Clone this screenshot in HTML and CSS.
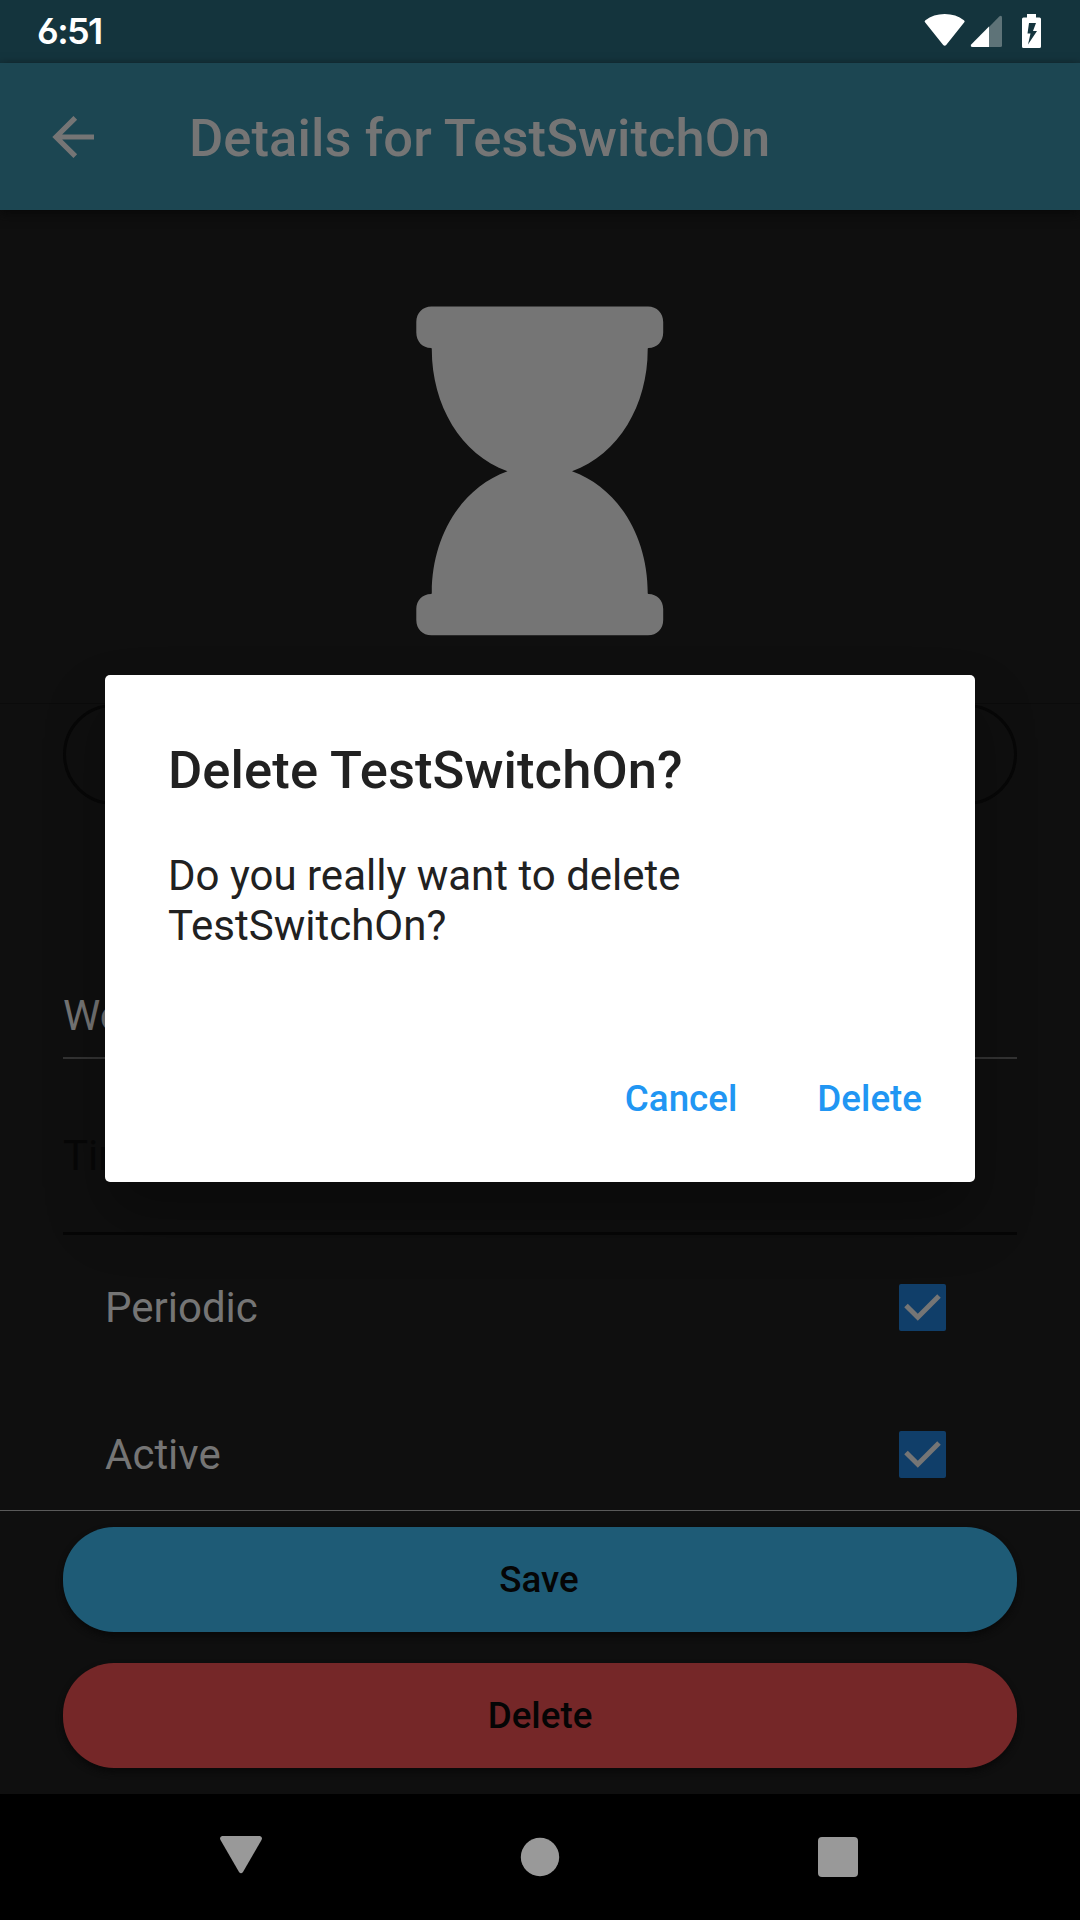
FILE: index.html
```html
<!DOCTYPE html>
<html lang="en">
<head>
<meta charset="utf-8">
<title>Details for TestSwitchOn</title>
<link rel="stylesheet" href="styles.css">
</head>
<body>
<div class="screen">
  <div class="status-bar">
    <span class="clock">6:51</span>
    <svg class="status-icons" width="120" height="36" viewBox="0 0 120 36">
      <path fill="#fff" d="M1 8.3Q0 7.1 1.4 6.2Q9.500 0 20.700 0Q32 0 39.900 6.200Q41.300 7.100 40.300 8.300L22.200 31Q20.700 32.600 19.200 31Z"/>
      <path fill="#5e7378" d="M65 13V33H76.500Q78 33 78 31.500V3.500Q78 1 75.500 2.200Z"/>
      <path fill="#fff" d="M65 12.600V33H48.500Q46 33 47.200 30.500Z"/>
      <path fill="#fff" fill-rule="evenodd" d="M103 0H112V3.500H115.500Q117 3.500 117 5V32.500Q117 34 115.500 34H99.500Q98 34 98 32.500V5Q98 3.500 99.500 3.500H103ZM105 9L103.500 19.500H106.500L104 30.500L113 17H109L112 9Z"/>
    </svg>
  </div>
  <header class="app-bar">
    <svg class="back" width="42" height="42" viewBox="0 0 42 42">
      <path fill="none" stroke="#757575" stroke-width="5.200" d="M42 21H4.500M23.300 1.800L4 21L23.300 40.200"/>
    </svg>
    <h1 class="app-title">Details for TestSwitchOn</h1>
  </header>
  <main class="content">
    <div class="hero">
      <svg width="248" height="330" viewBox="0 0 248 330">
        <path fill="#757575" d="M15.500 .5H232C241 .5 247.200 7 247.200 16V26.500C247.200 35.500 241 42 232.500 42Q231.700 42 231.700 43C232 98 203 149 156 165.200C203 182 232 232 231.700 287Q231.700 288 232.500 288C241 288 247.200 294.500 247.200 303V314C247.200 323 241 329.300 232 329.300H15.500C6.500 329.300 .3 323 .3 314V303C.3 294.500 6.500 288 15 288Q15.800 288 15.800 287C15.500 232 44.500 182 91.500 165.200C44.500 149 15.500 98 15.800 43Q15.800 42 15 42C6.500 42 .3 35.500 .3 26.500V16C.3 7 6.500 .5 15.500 .5Z"/>
      </svg>
    </div>
    <div class="form">
      <div class="outline-button"></div>
      <div class="field weekdays">Weekdays</div>
      <div class="field time">Time</div>
      <div class="option">
        <span>Periodic</span>
        <svg width="47" height="47" viewBox="0 0 47 47"><rect width="47" height="47" rx="2" fill="#103e69"/><path fill="none" stroke="#757575" stroke-width="5" d="M7 21.500L18.800 33.300L40 12"/></svg>
      </div>
      <div class="option">
        <span>Active</span>
        <svg width="47" height="47" viewBox="0 0 47 47"><rect width="47" height="47" rx="2" fill="#103e69"/><path fill="none" stroke="#757575" stroke-width="5" d="M7 21.500L18.800 33.300L40 12"/></svg>
      </div>
    </div>
  </main>
  <footer class="actions">
    <button class="pill save">Save</button>
    <button class="pill delete">Delete</button>
  </footer>
  <nav class="nav-bar">
    <svg width="42" height="42" viewBox="0 0 42 42"><path fill="#999" d="M2 0H40Q43 1 41.500 4L23 36Q21 38.500 19 36L.5 4Q-1 1 2 0Z"/></svg>
    <svg width="40" height="40" viewBox="0 0 40 40"><circle cx="20" cy="20" r="19.200" fill="#999"/></svg>
    <svg width="40" height="40" viewBox="0 0 40 40"><rect width="40" height="40" rx="4" fill="#999"/></svg>
  </nav>
  <div class="dialog" role="dialog">
    <h2 class="dialog-title">Delete TestSwitchOn?</h2>
    <p class="dialog-text">Do you really want to delete TestSwitchOn?</p>
    <div class="dialog-actions">
      <button class="text-button">Cancel</button>
      <button class="text-button">Delete</button>
    </div>
  </div>
</div>
</body>
</html>
```
FILE: styles.css
```css
* { box-sizing: border-box; }
body {
  margin: 0;
  background: #000;
  font-family: Roboto, "Liberation Sans", sans-serif;
}
h1, h2, p { margin: 0; font-weight: 500; }
svg { display: block; flex: none; }
button { border: 0; font-family: inherit; }

.screen {
  position: relative;
  display: flex;
  flex-direction: column;
  width: 1080px;
  height: 1920px;
  overflow: hidden;
  background: #0f0f0f;
}

.status-bar {
  display: flex;
  justify-content: space-between;
  height: 63px;
  padding: 14px 36px 0 37px;
  background: #14343d;
}
.clock {
  color: #fff;
  font: 600 36px/35px Inter, sans-serif;
  font-feature-settings: "ss01";
  letter-spacing: -1.6px;
}

.app-bar {
  display: flex;
  align-items: center;
  gap: 95px;
  height: 147px;
  padding-left: 52px;
  background: #1c4652;
  box-shadow: 0 4px 10px #090909;
  z-index: 1;
}
.app-title {
  padding-top: 3px;
  color: #757575;
  font-size: 52.5px;
  line-height: 60px;
  letter-spacing: .08px;
}

.content {
  display: flex;
  flex-direction: column;
  height: 1301px;
  overflow: hidden;
  border-bottom: 1px solid #5a5a5a;
}
.hero {
  display: flex;
  flex: none;
  justify-content: center;
  height: 494px;
  padding-top: 96px;
  border-bottom: 1px solid #0b0b0b;
}
.form { padding: 0 63px; font-size: 42px; }
.outline-button {
  height: 101px;
  border: 3px solid #070707;
  border-radius: 51px;
}
.field { line-height: 50px; }
.weekdays {
  height: 254px;
  padding-top: 186px;
  border-bottom: 2px solid #333;
  color: #757575;
}
.time {
  height: 176px;
  padding-top: 72px;
  border-bottom: 3px solid #060606;
  color: #070707;
}
.option {
  display: flex;
  align-items: center;
  justify-content: space-between;
  height: 147px;
  margin-top: -1px;
  padding: 0 71px 0 42px;
  color: #757575;
}
.option + .option { margin-top: 0; }

.actions {
  display: flex;
  flex-direction: column;
  gap: 31px;
  height: 283px;
  padding: 16px 63px 0;
}
.pill {
  height: 105px;
  border-radius: 51px;
  color: #050505;
  font-size: 36.75px;
  font-weight: 500;
  box-shadow: 0 4px 6px #090909;
}
.save { padding-right: 8px; background: #1e5b76; }
.delete { background: #752728; }

.nav-bar {
  display: flex;
  justify-content: space-between;
  align-items: center;
  height: 126px;
  padding: 0 222px 0 220px;
  background: #000;
}

.dialog {
  position: absolute;
  top: 675px;
  left: 105px;
  display: flex;
  flex-direction: column;
  width: 870px;
  height: 507px;
  padding: 65px 21px 21px 63px;
  border-radius: 5px;
  background: #fff;
  color: #212121;
  box-shadow: 0 34px 60px rgba(0, 0, 0, .3);
  z-index: 2;
}
.dialog-title {
  font-size: 52.5px;
  line-height: 60px;
  letter-spacing: .1px;
}
.dialog-text {
  width: 620px;
  margin-top: 51px;
  font-size: 42px;
  font-weight: 400;
  line-height: 50px;
}
.dialog-actions {
  display: flex;
  justify-content: flex-end;
  gap: 16px;
  height: 126px;
  margin-top: auto;
}
.text-button {
  padding: 0 32px;
  background: none;
  color: #2196f3;
  font-size: 36.75px;
  font-weight: 500;
}
```
